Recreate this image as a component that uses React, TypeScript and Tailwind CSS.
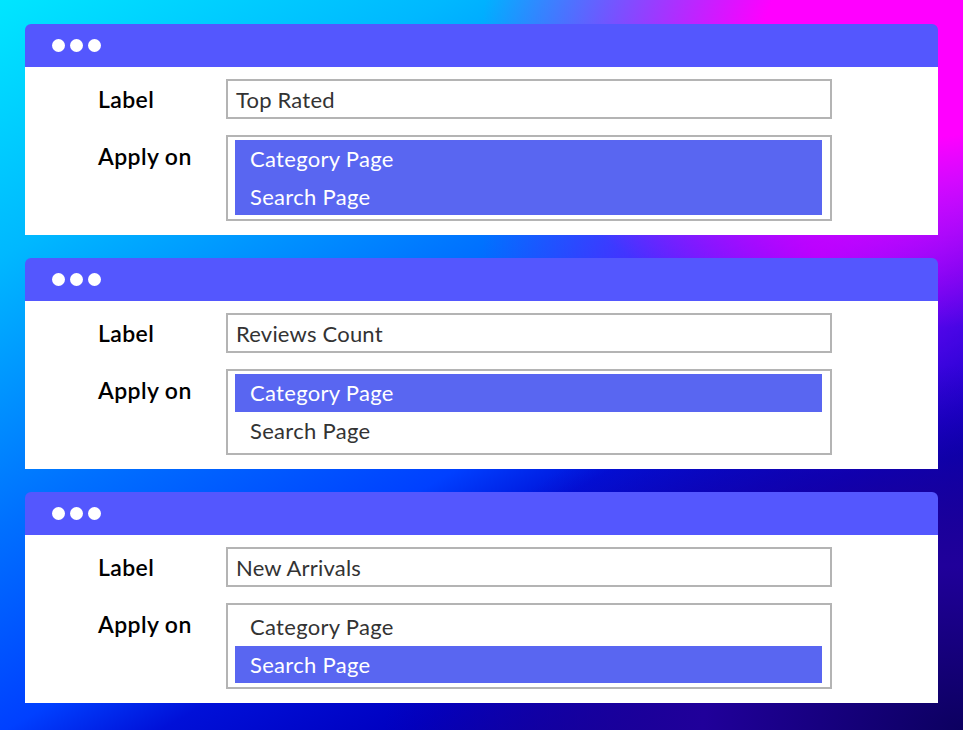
import React from 'react';

interface Panel {
  label: string;
  selected: string[];
}

const options = ['Category Page', 'Search Page'];

const panels: Panel[] = [
  { label: 'Top Rated', selected: ['Category Page', 'Search Page'] },
  { label: 'Reviews Count', selected: ['Category Page'] },
  { label: 'New Arrivals', selected: ['Search Page'] }
];

const FilterCard: React.FC<{ panel: Panel }> = ({ panel }) => {
  return (
    <div className="w-[913px] shrink-0">
      {/* Window bar */}
      <div className="h-[43px] rounded-t-[6px] bg-[#5457fe] flex items-center pl-[27px] gap-[5px]">
        <span className="w-[13px] h-[13px] rounded-full bg-white"></span>
        <span className="w-[13px] h-[13px] rounded-full bg-white"></span>
        <span className="w-[13px] h-[13px] rounded-full bg-white"></span>
      </div>

      {/* Form */}
      <div className="h-[168px] bg-white pt-[12px] pl-[73px] flex flex-col gap-[16px]">
        <div className="flex items-center">
          <div className="w-[128px] text-[23px] font-semibold tracking-[0.4px] text-black">Label</div>
          <div className="w-[606px] h-[40px] border-2 border-[#b4b4b4] flex items-center px-[8px] text-[22px] tracking-[0.2px] text-[#333]">
            {panel.label}
          </div>
        </div>
        <div className="flex items-start">
          <div className="w-[128px] h-[38px] mt-[2px] flex items-center text-[23px] font-semibold tracking-[0.4px] text-black">
            Apply on
          </div>
          <div className="w-[606px] h-[86px] border-2 border-[#b4b4b4] pt-[3px] pb-[4px] pl-[7px] pr-[8px] flex flex-col">
            {options.map((opt) => {
              const on = panel.selected.includes(opt);
              return (
                <div
                  key={opt}
                  className={
                    on
                      ? 'h-[37.5px] flex items-center px-[15px] text-[22px] tracking-[0.3px] bg-[#5966f1] text-white'
                      : 'h-[37.5px] flex items-center px-[15px] text-[22px] tracking-[0.3px] text-[#333]'
                  }
                >
                  {opt}
                </div>
              );
            })}
          </div>
        </div>
      </div>
    </div>
  );
};

export default function App() {
  return (
    <div
      className="w-[963px] h-[730px] overflow-hidden pt-[24px] px-[25px] flex flex-col gap-[23px] font-['Lato',sans-serif] bg-[radial-gradient(ellipse_45%_40%_at_95%_5%,#ff00ff_0%,#ff00ff_35%,rgba(255,0,255,0)_100%),radial-gradient(ellipse_60%_50%_at_100%_100%,#0c0060_0%,#20009a_45%,rgba(40,0,180,0)_100%),radial-gradient(ellipse_35%_30%_at_85%_35%,#9a00ff_0%,rgba(154,0,255,0)_100%),linear-gradient(150deg,#00e6ff_0%,#00b8ff_20%,#0070ff_41%,#0040ff_57%,#0010d8_64%,#0000c0_75%,#100060_100%)]"
    >
      {panels.map((p) => (
        <FilterCard key={p.label} panel={p} />
      ))}
    </div>
  );
}
